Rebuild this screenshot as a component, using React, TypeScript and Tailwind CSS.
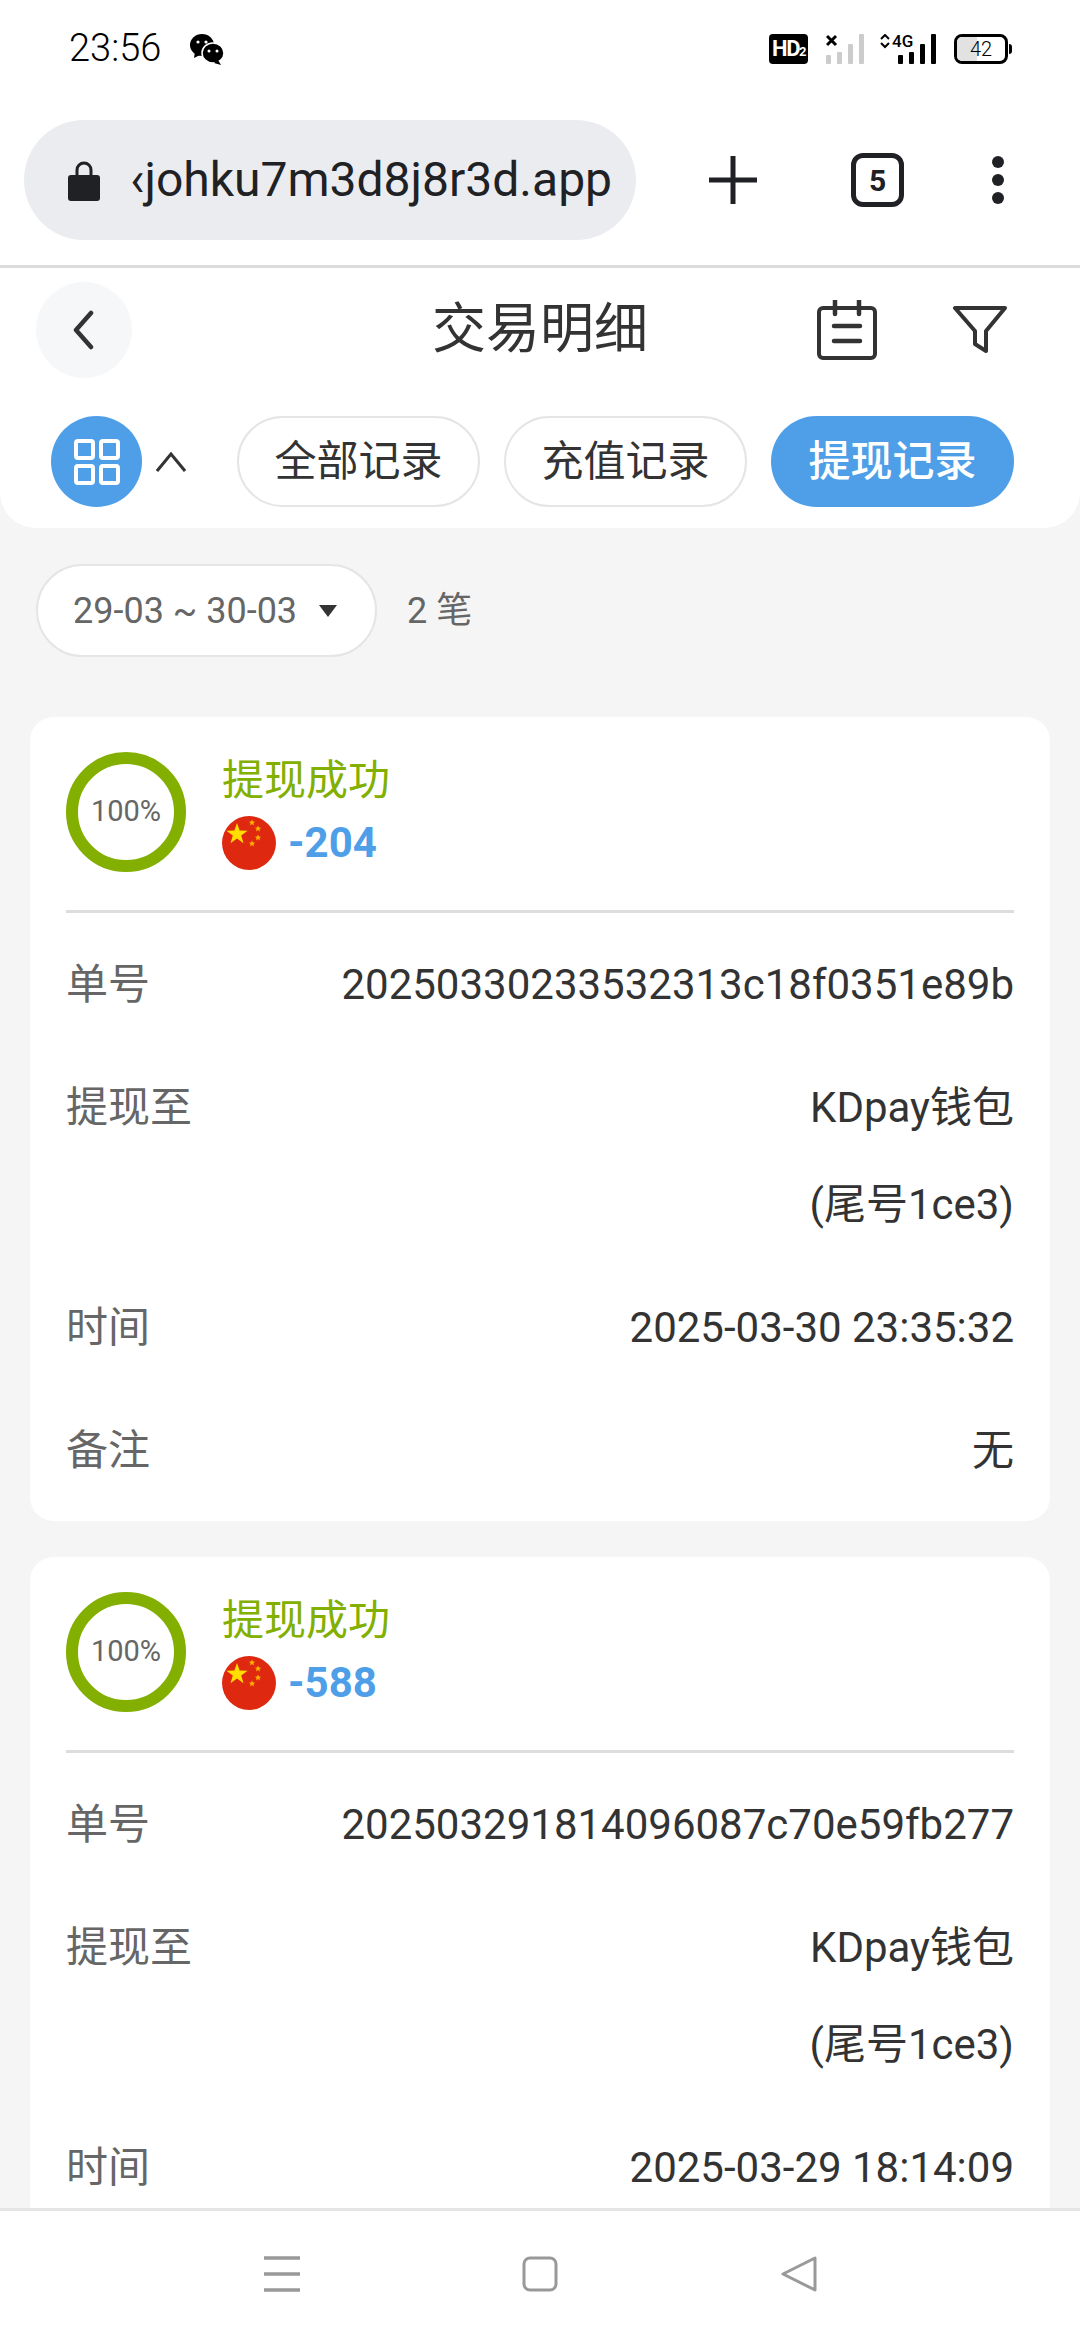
import * as React from 'react';

const Flag = () => (
    <svg viewBox="0 0 54 54" className="w-[54px] h-[54px] shrink-0">
        <circle cx="27" cy="27" r="27" fill="#de2910" />
        <polygon fill="#ffde00" points="15,7 17.6,14.6 25.6,14.7 19.2,19.5 21.5,27.2 15,22.6 8.5,27.2 10.8,19.5 4.4,14.7 12.4,14.6" />
        <polygon fill="#ffb400" points="30,3.5 30.9,5.6 33.2,5.7 31.4,7.1 32,9.4 30,8.1 28,9.4 28.6,7.1 26.8,5.7 29.1,5.6" />
        <polygon fill="#ffb400" points="36,9.5 36.9,11.6 39.2,11.7 37.4,13.1 38,15.4 36,14.1 34,15.4 34.6,13.1 32.8,11.7 35.1,11.6" />
        <polygon fill="#ffb400" points="36,18.5 36.9,20.6 39.2,20.7 37.4,22.1 38,24.4 36,23.1 34,24.4 34.6,22.1 32.8,20.7 35.1,20.6" />
        <polygon fill="#ffb400" points="30,24.5 30.9,26.6 33.2,26.7 31.4,28.1 32,30.4 30,29.1 28,30.4 28.6,28.1 26.8,26.7 29.1,26.6" />
    </svg>
);

const Row = ({ label, value, sub }: { label: string, value: string, sub?: string }) => (
    <div className="flex justify-between items-start pb-[40px]">
        <span className="text-[42px] leading-[83px] text-[#666666]">{label}</span>
        <div className="text-right text-[42px] leading-[83px] text-[#333333]">
            <p className="leading-[83px]">{value}</p>
            {sub && <p className="mt-[14px] leading-[83px]">{sub}</p>}
        </div>
    </div>
);

const Card = ({ amount, no, time, note }: { amount: string, no: string, time: string, note?: string }) => (
    <div className="bg-white rounded-[24px] px-[36px] pt-[33px] shrink-0 h-[804px] mb-[36px]">
        <div className="flex items-center h-[124px]">
            <div className="w-[120px] h-[120px] rounded-full border-[12px] border-[#82af00] flex items-center justify-center shrink-0">
                <span className="text-[29px] text-[#666666]">100%</span>
            </div>
            <div className="ml-[36px] flex flex-col">
                <span className="text-[42px] leading-[56px] text-[#82af00] -mt-[1px]">提现成功</span>
                <div className="flex items-center gap-[12px] mt-[7px]">
                    <Flag />
                    <span className="text-[42px] leading-[54px] font-bold text-[#4e9fe8]">{amount}</span>
                </div>
            </div>
        </div>
        <div className="h-[3px] bg-[#dddddd] mt-[36px] mb-[30px]" />
        <Row label="单号" value={no} />
        <Row label="提现至" value="KDpay钱包" sub="(尾号1ce3)" />
        <Row label="时间" value={time} />
        {note && <Row label="备注" value={note} />}
    </div>
);

const Tab = ({ label, active }: { label: string, active?: boolean }) => (
    <div className={active
        ? "w-[243px] h-[91px] rounded-full bg-[#4e9fe8] text-white font-medium flex items-center justify-center text-[42px]"
        : "w-[243px] h-[91px] rounded-full border-2 border-[#e5e5e5] text-[#333333] flex items-center justify-center text-[42px]"}>
        {label}
    </div>
);

export default function App() {
    return (
        <div className="w-[1080px] h-[2340px] flex flex-col overflow-hidden bg-[#f5f5f5] font-['Roboto','Noto_Sans_CJK_SC',sans-serif]">
            {/* status bar */}
            <div className="h-[100px] bg-white flex items-center justify-between pl-[69px] pr-[68px] pb-[3px] shrink-0">
                <div className="flex items-center gap-[28px]">
                    <span className="text-[38px] text-black font-light">23:56</span>
                    <svg viewBox="0 0 36 32" className="w-[36px] h-[32px]" fill="#000">
                        <ellipse cx="13" cy="12" rx="12" ry="11" />
                        <path d="M6 19l-1 6 6-3z" />
                        <ellipse cx="24" cy="20" rx="11" ry="10" stroke="#fff" strokeWidth="1.5" />
                        <path d="M29 27l3 5-7-2z" />
                        <circle cx="9" cy="9" r="1.6" fill="#fff" />
                        <circle cx="17" cy="9" r="1.6" fill="#fff" />
                        <circle cx="20" cy="18" r="1.5" fill="#fff" />
                        <circle cx="28" cy="18" r="1.5" fill="#fff" />
                    </svg>
                </div>
                <div className="flex items-center">
                    <div className="w-[39px] h-[30px] bg-black rounded-[4px] text-white font-bold text-[22px] leading-[30px] text-center tracking-[-1.5px]">HD<span className="text-[13px]">2</span></div>
                    <svg viewBox="0 0 40 30" className="w-[40px] h-[30px] ml-[18px]">
                        <path d="M1 2l9 9M10 2l-9 9" stroke="#000" strokeWidth="3" />
                        <rect x="0" y="21" width="5" height="9" rx="1" fill="#ccc" />
                        <rect x="11" y="18" width="5" height="12" rx="1" fill="#ccc" />
                        <rect x="22" y="10" width="5" height="20" rx="1" fill="#ccc" />
                        <rect x="33" y="0" width="5" height="30" rx="1" fill="#ccc" />
                    </svg>
                    <div className="relative w-[56px] h-[30px] ml-[14px]">
                        <span className="absolute left-[12px] top-[-3px] text-[17px] font-medium leading-[20px] text-black">4G</span>
                        <svg viewBox="0 0 56 30" className="w-[56px] h-[30px]">
                            <path d="M1 5l4-4 4 4M1 9l4 4 4-4" fill="none" stroke="#000" strokeWidth="2" />
                            <rect x="18" y="21" width="5" height="9" rx="1" fill="#000" />
                            <rect x="29" y="18" width="5" height="12" rx="1" fill="#000" />
                            <rect x="40" y="10" width="5" height="20" rx="1" fill="#000" />
                            <rect x="51" y="0" width="5" height="30" rx="1" fill="#000" />
                        </svg>
                    </div>
                    <div className="ml-[18px] relative w-[54px] h-[30px] rounded-[8px] border-[3px] border-black overflow-hidden flex items-center justify-center">
                        <div className="absolute left-0 top-0 bottom-0 w-[20px] bg-[#e2e2e2]" />
                        <span className="relative text-[20px] font-light text-black">42</span>
                    </div>
                    <div className="w-[3px] h-[10px] bg-black rounded-r-sm ml-[1px]" />
                </div>
            </div>

            {/* browser bar */}
            <div className="h-[168px] bg-white flex items-center pl-[24px] shrink-0 border-b-[3px] border-[#dcdcdc]">
                <div className="w-[612px] h-[120px] rounded-full bg-[#ebecf0] flex items-center pl-[44px] mb-[5px]">
                    <svg viewBox="0 0 32 42" className="w-[32px] h-[42px] shrink-0" fill="#202124">
                        <path d="M9 18v-7a7 7 0 0 1 14 0v7" fill="none" stroke="#202124" strokeWidth="3" />
                        <rect x="0" y="16" width="32" height="26" rx="3" />
                    </svg>
                    <span className="ml-[30px] text-[48px] text-[#202124] whitespace-nowrap">‹johku7m3d8j8r3d.app</span>
                </div>
                <svg viewBox="0 0 48 48" className="w-[48px] h-[48px] ml-[73px] mb-[5px]">
                    <path d="M24 0v48M0 24h48" stroke="#202124" strokeWidth="5" strokeLinecap="round" />
                </svg>
                <div className="ml-[94px] w-[53px] h-[54px] rounded-[12px] border-[5px] border-[#202124] flex items-center justify-center text-[30px] font-bold text-[#202124] mb-[5px]">5</div>
                <svg viewBox="0 0 14 48" className="w-[14px] h-[48px] ml-[87px] mb-[5px]" fill="#202124">
                    <circle cx="7" cy="6" r="6" /><circle cx="7" cy="24" r="6" /><circle cx="7" cy="42" r="6" />
                </svg>
            </div>

            {/* page */}
            <div className="flex-1 min-h-0 overflow-hidden">
                <div className="bg-white rounded-b-[36px] h-[260px] px-[36px] pt-[14px]">
                    <div className="flex items-center h-[96px] relative">
                        <div className="w-[96px] h-[96px] rounded-full bg-[#f6f7f9] flex items-center justify-center">
                            <svg viewBox="0 0 24 40" className="w-[24px] h-[40px] -ml-[2px]">
                                <path d="M20 3L5 20l15 17" fill="none" stroke="#333" strokeWidth="4.5" strokeLinecap="round" strokeLinejoin="round" />
                            </svg>
                        </div>
                        <span className="absolute left-[396px] top-[18px] text-[54px] leading-[60px] text-[#333333]">交易明细</span>
                        <svg viewBox="0 0 60 60" className="w-[60px] h-[60px] ml-[685px]" fill="none" stroke="#333" strokeWidth="4">
                            <rect x="2" y="8" width="56" height="50" rx="4" />
                            <path d="M18 0v14M42 0v14M17 26h26M17 41h26" strokeLinecap="round" strokeWidth="4.5" />
                        </svg>
                        <svg viewBox="0 0 54 50" className="w-[54px] h-[50px] ml-[76px]" fill="none" stroke="#333" strokeWidth="4" strokeLinejoin="round">
                            <path d="M2 3h50L33 26v20l-11-7V26z" />
                        </svg>
                    </div>
                    <div className="flex items-center mt-[38px]">
                        <div className="w-[91px] h-[91px] rounded-full bg-[#4e9fe8] flex items-center justify-center ml-[15px]">
                            <svg viewBox="0 0 46 46" className="w-[46px] h-[46px]" fill="none" stroke="#fff" strokeWidth="4">
                                <rect x="2" y="2" width="17" height="17" rx="2" /><rect x="27" y="2" width="17" height="17" rx="2" />
                                <rect x="2" y="27" width="17" height="17" rx="2" /><rect x="27" y="27" width="17" height="17" rx="2" />
                            </svg>
                        </div>
                        <svg viewBox="0 0 30 20" className="w-[30px] h-[20px] ml-[14px]" fill="none" stroke="#333" strokeWidth="3">
                            <path d="M1 19L15 2l14 17" />
                        </svg>
                        <div className="flex gap-[24px] ml-[51px]">
                            <Tab label="全部记录" />
                            <Tab label="充值记录" />
                            <Tab label="提现记录" active />
                        </div>
                    </div>
                </div>

                <div className="flex items-center px-[36px] mt-[36px] mb-[60px]">
                    <div className="w-[341px] h-[93px] rounded-full bg-white border-2 border-[#e5e5e5] flex items-center pl-[35px]">
                        <span className="text-[36px] text-[#666666] whitespace-nowrap">29-03 ~ 30-03</span>
                        <span className="ml-[22px] w-0 h-0 border-x-[9px] border-x-transparent border-t-[12px] border-t-[#333333]" />
                    </div>
                    <span className="ml-[30px] text-[36px] text-[#666666]">2 笔</span>
                </div>

                <div className="px-[30px] flex flex-col">
                    <Card amount="-204" no="20250330233532313c18f0351e89b" time="2025-03-30 23:35:32" note="无" />
                    <Card amount="-588" no="202503291814096087c70e59fb277" time="2025-03-29 18:14:09" />
                </div>
            </div>

            {/* nav bar */}
            <div className="h-[132px] bg-white border-t-[3px] border-[#e4e6e3] shrink-0 flex items-center justify-center pb-[4px] pl-[1px]">
                <svg viewBox="0 0 36 36" className="w-[36px] h-[36px]" stroke="#999" strokeWidth="3.5">
                    <path d="M0 2h36M0 18h36M0 34h36" />
                </svg>
                <svg viewBox="0 0 36 36" className="w-[36px] h-[36px] ml-[222px]" fill="none" stroke="#999" strokeWidth="3">
                    <rect x="2" y="2" width="32" height="32" rx="6" />
                </svg>
                <svg viewBox="0 0 36 36" className="w-[36px] h-[36px] ml-[223px]" fill="none" stroke="#999" strokeWidth="3" strokeLinejoin="round">
                    <path d="M34 2v32L2 18z" />
                </svg>
            </div>
        </div>
    );
}
